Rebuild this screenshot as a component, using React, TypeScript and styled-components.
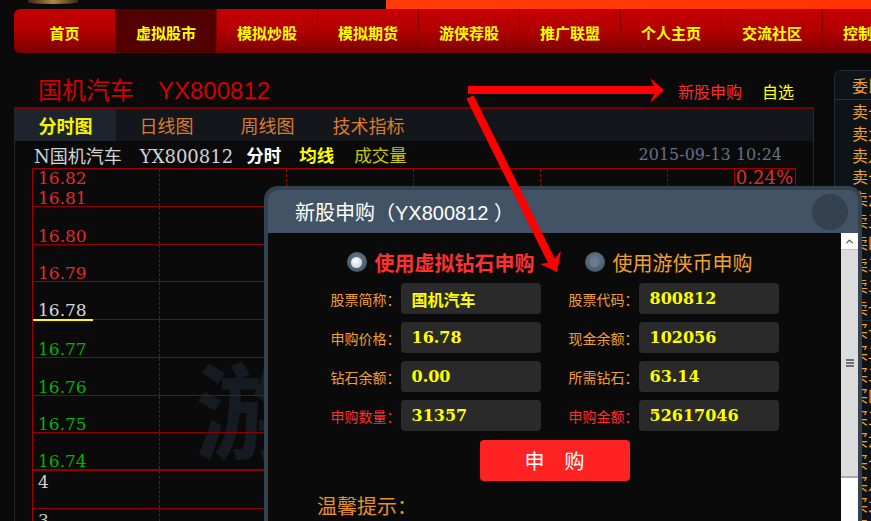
import React from 'react';
import styled, { createGlobalStyle } from 'styled-components';
import { ChevronUp } from 'lucide-react';

const GlobalStyle = createGlobalStyle`
  html, body { margin: 0; padding: 0; background: #0a0a0a; }
  body { font-family: "Liberation Sans", "Noto Sans CJK SC", sans-serif; }
  * { box-sizing: border-box; }
`;

const RED = '#e02a2a';
const GREEN = '#00b400';
const ORANGE = '#f0a030';

const Page = styled.div`
    position: relative;
    width: 871px;
    height: 521px;
    overflow: hidden;
    background: #0a0a0a;
`;

const TopStrip = styled.div`
    display: flex;
    height: 9px;
`;

const LogoBit = styled.div`
    margin-left: 28px;
    width: 50px;
    height: 4px;
    border-radius: 0 0 50% 50%;
    background: linear-gradient(90deg, #3a2a16, #b0883e, #3a2a16);
`;

const Banner = styled.div`
    margin-left: auto;
    width: 485px;
    height: 9px;
    background: linear-gradient(90deg, #ff3c0a, #ff3400);
`;

const NavBar = styled.nav`
    display: flex;
    margin-left: 14px;
    height: 44px;
    border-radius: 6px 0 0 6px;
    overflow: hidden;
`;

const NavItem = styled.a<{ $active?: boolean }>`
    flex: 0 0 101px;
    display: flex;
    align-items: center;
    justify-content: center;
    padding-top: 3px;
    color: #ffff00;
    font-size: 15px;
    font-weight: bold;
    white-space: nowrap;
    background: ${p => p.$active ? '#520000' : 'linear-gradient(#c60000, #b00000 50%, #7c0000)'};
    border-left: 1px solid #870000;
    &:first-child { border-left: none; }
`;

const Content = styled.div`
    display: flex;
    gap: 20px;
    padding-left: 14px;
`;

const Main = styled.div`
    flex: 0 0 800px;
`;

const TitleRow = styled.div`
    display: flex;
    align-items: center;
    height: 54px;
    padding: 16px 20px 0 24px;
`;

const StockTitle = styled.h1`
    margin: 0;
    font-size: 24px;
    font-weight: normal;
    color: #d40000;
    & span + span { margin-left: 24px; }
`;

const TitleLinks = styled.div`
    margin-left: auto;
    margin-top: 5px;
    display: flex;
    gap: 20px;
    font-size: 16px;
`;

const TitleLink = styled.a<{ $color: string }>`
    color: ${p => p.$color};
`;

const Panel = styled.div`
    border-top: 2px solid #780000;
    border-left: 1px solid #262626;
    border-right: 1px solid #262626;
`;

const TabBar = styled.div`
    display: flex;
    height: 32px;
    background: #13171c;
`;

const Tab = styled.div<{ $active?: boolean }>`
    flex: 0 0 101px;
    display: flex;
    align-items: center;
    justify-content: center;
    font-size: 18px;
    color: ${p => p.$active ? '#f4f400' : '#dc7a2c'};
    font-weight: ${p => p.$active ? 'bold' : 'normal'};
    background: ${p => p.$active ? '#1d242d' : 'transparent'};
`;

const InfoLine = styled.div`
    display: flex;
    align-items: center;
    height: 27px;
    padding: 0 31px 0 19px;
    font-family: "DejaVu Serif", "Noto Sans CJK SC", serif;
    font-size: 18px;
`;

const InfoName = styled.span`
    color: #d4d4d4;
    & b { font-weight: normal; margin-left: 18px; }
`;

const InfoTag = styled.span<{ $color: string; $bold?: boolean; $gap: number }>`
    margin-left: ${p => p.$gap}px;
    color: ${p => p.$color};
    font-weight: ${p => p.$bold ? 'bold' : 'normal'};
    font-family: "Noto Sans CJK SC", sans-serif;
    font-size: 17.5px;
`;

const DateText = styled.span`
    margin-left: auto;
    color: #64708a;
    font-size: 16px;
`;

const Chart = styled.div`
    position: relative;
    margin-left: 17px;
    width: 764px;
    border: 1px solid #a00000;
    border-bottom: none;
`;

const Watermark = styled.div`
    position: absolute;
    left: 162px;
    top: 186px;
    font-family: "Noto Sans CJK SC", sans-serif;
    font-weight: bold;
    font-size: 104px;
    line-height: 1;
    color: #151b23;
`;

const GridRow = styled.div<{ $heavy?: boolean }>`
    position: relative;
    display: grid;
    grid-template-columns: repeat(6, 1fr);
    height: 37.75px;
    border-bottom: ${p => p.$heavy ? 2 : 1}px solid #900000;
`;

const Cell = styled.div`
    border-right: 1px dashed #a00000;
    &:last-child { border-right: none; }
`;

const LabelCell = styled(Cell)<{ $align: 'top' | 'bottom' | 'split' }>`
    display: flex;
    flex-direction: column;
    justify-content: ${p => p.$align === 'top' ? 'flex-start' : p.$align === 'bottom' ? 'flex-end' : 'space-between'};
    align-items: flex-start;
    padding: ${p => p.$align === 'top' ? '3px 0 0 5px' : '1px 0 0 5px'};
`;

const Price = styled.span<{ $color: string; $mark?: boolean }>`
    position: relative;
    font-family: "DejaVu Serif", serif;
    font-size: 17px;
    line-height: 16px;
    color: ${p => p.$color};
    ${p => p.$mark ? `
        margin-left: -5px;
        padding: 0 0 1px 5px;
        width: 60px;
        margin-bottom: -2px;
        border-bottom: 2px solid #ffff00;
    ` : ''}
`;

const PercentCell = styled(Cell)`
    display: flex;
    justify-content: flex-end;
    align-items: flex-start;
`;

const PercentBox = styled.span`
    width: 61px;
    height: 19px;
    border-left: 1px solid #a00000;
    border-bottom: 1px solid #a00000;
    font-family: "DejaVu Serif", serif;
    font-size: 18px;
    line-height: 18px;
    color: ${RED};
    text-align: right;
    padding-right: 2px;
`;

const Side = styled.aside`
    flex: 0 0 200px;
    margin-top: 17px;
    height: 460px;
    border: 1px solid #232a33;
    border-radius: 7px 0 0 0;
    background: #0e1318;
`;

const SideHead = styled.div`
    height: 29px;
    padding: 7px 0 0 17px;
    border-bottom: 1px solid #2a313a;
    color: ${ORANGE};
    font-size: 16px;
    line-height: 18px;
`;

const SideGroup = styled.div`
    padding-top: 2px;
    border-bottom: 1px solid #2a313a;
`;

const SideRow = styled.div`
    height: 21.8px;
    padding-left: 17px;
    color: ${ORANGE};
    font-size: 16px;
    line-height: 21.8px;
`;

const Dialog = styled.div`
    position: absolute;
    left: 264px;
    top: 186px;
    width: 598px;
    height: 420px;
    display: flex;
    flex-direction: column;
    padding: 4px 4px 0 4px;
    border-radius: 14px 14px 0 0;
    background: #34414f;
`;

const DialogHeader = styled.div`
    flex: 0 0 43px;
    display: flex;
    align-items: center;
    padding: 0 10px 0 27px;
    border-radius: 10px 10px 0 0;
    background: #435366;
`;

const DialogTitle = styled.h2`
    margin: 0;
    font-size: 20px;
    font-weight: normal;
    color: #ffffff;
    white-space: pre;
`;

const CloseButton = styled.button`
    margin-left: auto;
    width: 36px;
    height: 36px;
    border: none;
    border-radius: 50%;
    background: #34424f;
`;

const DialogBody = styled.div`
    flex: 1;
    display: flex;
    background: #0a0a0a;
`;

const FormArea = styled.div`
    flex: 1;
    padding-top: 15px;
`;

const RadioRow = styled.div`
    display: flex;
    justify-content: center;
    gap: 50px;
    height: 28px;
    margin-right: 10px;
`;

const RadioOption = styled.label<{ $color: string; $bold?: boolean }>`
    display: flex;
    align-items: center;
    gap: 8px;
    font-size: 20px;
    color: ${p => p.$color};
    font-weight: ${p => p.$bold ? 'bold' : 'normal'};
`;

const RadioDot = styled.span<{ $checked?: boolean }>`
    display: flex;
    align-items: center;
    justify-content: center;
    width: 20px;
    height: 20px;
    border-radius: 50%;
    background: radial-gradient(circle at 50% 40%, #6c7d91, #3e4d5f);
    &::after {
        content: '';
        width: ${p => p.$checked ? 11 : 9}px;
        height: ${p => p.$checked ? 11 : 9}px;
        border-radius: 50%;
        background: ${p => p.$checked ? 'radial-gradient(circle at 40% 35%, #ffffff, #c4c9d0)' : '#6b7c91'};
    }
`;

const Fields = styled.div`
    display: flex;
    flex-direction: column;
    gap: 8px;
    margin-top: 7px;
`;

const FieldRow = styled.div`
    display: flex;
    justify-content: center;
    gap: 28px;
`;

const Field = styled.div`
    display: flex;
    align-items: center;
`;

const FieldLabel = styled.span<{ $color: string }>`
    flex: 0 0 70px;
    font-size: 14px;
    white-space: nowrap;
    color: ${p => p.$color};
`;

const FieldValue = styled.div`
    width: 140px;
    height: 31px;
    padding-left: 11px;
    display: flex;
    align-items: center;
    border-radius: 4px;
    background: #2a2a2a;
    color: #ffff00;
    font-family: "DejaVu Serif", "Noto Sans CJK SC", serif;
    font-weight: bold;
    font-size: 16px;
`;

const SubmitRow = styled.div`
    display: flex;
    justify-content: center;
    margin-top: 9px;
`;

const SubmitButton = styled.button`
    width: 150px;
    height: 41px;
    border: none;
    border-radius: 4px;
    background: #ff2222;
    color: #ffffff;
    font-family: "Noto Sans CJK SC", sans-serif;
    font-size: 20px;
`;

const Tips = styled.div`
    margin: 10px 0 0 49px;
    font-size: 20px;
    color: #e8922c;
`;

const Scrollbar = styled.div`
    flex: 0 0 17px;
    display: flex;
    flex-direction: column;
    background: #ffffff;
`;

const ScrollUp = styled.div`
    height: 16px;
    display: flex;
    align-items: center;
    justify-content: center;
    color: #555;
`;

const ScrollThumb = styled.div`
    height: 229px;
    display: flex;
    align-items: center;
    justify-content: center;
    background: #dcdcdc;
    border-top: 1px solid #c4c4c4;
    border-bottom: 2px solid #aaaaaa;
`;

const Grip = styled.span`
    width: 8px;
    height: 8px;
    background: repeating-linear-gradient(#707070 0 2px, transparent 2px 3px);
`;

const Arrows = styled.svg`
    position: absolute;
    left: 0;
    top: 0;
    pointer-events: none;
`;

const navItems = ['首页', '虚拟股市', '模拟炒股', '模拟期货', '游侠荐股', '推广联盟', '个人主页', '交流社区', '控制面板'];
const tabs = ['分时图', '日线图', '周线图', '技术指标'];

type PriceRow = {
    align: 'top' | 'bottom' | 'split';
    labels: { text: string; color: string; mark?: boolean }[];
    heavy?: boolean;
    percent?: string;
};

const priceRows: PriceRow[] = [
    { align: 'split', labels: [{ text: '16.82', color: RED }, { text: '16.81', color: RED }], percent: '0.24%' },
    { align: 'bottom', labels: [{ text: '16.80', color: RED }] },
    { align: 'bottom', labels: [{ text: '16.79', color: RED }] },
    { align: 'bottom', labels: [{ text: '16.78', color: '#d8d8d8', mark: true }] },
    { align: 'bottom', labels: [{ text: '16.77', color: GREEN }] },
    { align: 'bottom', labels: [{ text: '16.76', color: GREEN }] },
    { align: 'bottom', labels: [{ text: '16.75', color: GREEN }] },
    { align: 'bottom', labels: [{ text: '16.74', color: GREEN }], heavy: true },
    { align: 'top', labels: [{ text: '4', color: '#d0d0d0' }] },
    { align: 'top', labels: [{ text: '3', color: '#d0d0d0' }] },
];

const sellRows = ['卖十', '卖九', '卖八', '卖七', '卖六', '卖五', '卖四', '卖三', '卖二', '卖一'];
const buyRows = ['买一', '买二', '买三', '买四', '买五', '买六', '买七', '买八', '买九', '买十'];

const fields = [
    [{ label: '股票简称：', value: '国机汽车' }, { label: '股票代码：', value: '800812' }],
    [{ label: '申购价格：', value: '16.78' }, { label: '现金余额：', value: '102056' }],
    [{ label: '钻石余额：', value: '0.00' }, { label: '所需钻石：', value: '63.14' }],
    [{ label: '申购数量：', value: '31357', red: true }, { label: '申购金额：', value: '52617046', red: true }],
];

const App: React.FC = () => {
    return (
        <Page>
            <GlobalStyle />
            <TopStrip>
                <LogoBit />
                <Banner />
            </TopStrip>
            <NavBar>
                {navItems.map(item => (
                    <NavItem key={item} $active={item === '虚拟股市'}>{item}</NavItem>
                ))}
            </NavBar>

            <Content>
                <Main>
                    <TitleRow>
                        <StockTitle><span>国机汽车</span><span>YX800812</span></StockTitle>
                        <TitleLinks>
                            <TitleLink $color="#ff2a2a">新股申购</TitleLink>
                            <TitleLink $color="#ffff00">自选</TitleLink>
                        </TitleLinks>
                    </TitleRow>
                    <Panel>
                        <TabBar>
                            {tabs.map((t, i) => <Tab key={t} $active={i === 0}>{t}</Tab>)}
                        </TabBar>
                        <InfoLine>
                            <InfoName>N国机汽车<b>YX800812</b></InfoName>
                            <InfoTag $color="#ffffff" $bold $gap={13}>分时</InfoTag>
                            <InfoTag $color="#ffff00" $bold $gap={18}>均线</InfoTag>
                            <InfoTag $color="#c8c800" $gap={20}>成交量</InfoTag>
                            <DateText>2015-09-13 10:24</DateText>
                        </InfoLine>
                        <Chart>
                            <Watermark>游</Watermark>
                            {priceRows.map((row, i) => (
                                <GridRow key={i} $heavy={row.heavy}>
                                    <LabelCell $align={row.align}>
                                        {row.labels.map(l => (
                                            <Price key={l.text} $color={l.color} $mark={l.mark}>{l.text}</Price>
                                        ))}
                                    </LabelCell>
                                    <Cell />
                                    <Cell />
                                    <Cell />
                                    <Cell />
                                    {row.percent
                                        ? <PercentCell><PercentBox>{row.percent}</PercentBox></PercentCell>
                                        : <Cell />}
                                </GridRow>
                            ))}
                        </Chart>
                    </Panel>
                </Main>

                <Side>
                    <SideHead>委比</SideHead>
                    <SideGroup>
                        {sellRows.map(r => <SideRow key={r}>{r}</SideRow>)}
                    </SideGroup>
                    {buyRows.map(r => <SideRow key={r}>{r}</SideRow>)}
                </Side>
            </Content>

            <Dialog>
                <DialogHeader>
                    <DialogTitle>新股申购（YX800812 ）</DialogTitle>
                    <CloseButton aria-label="close" />
                </DialogHeader>
                <DialogBody>
                    <FormArea>
                        <RadioRow>
                            <RadioOption $color="#ff3030" $bold><RadioDot $checked />使用虚拟钻石申购</RadioOption>
                            <RadioOption $color={ORANGE}><RadioDot />使用游侠币申购</RadioOption>
                        </RadioRow>
                        <Fields>
                            {fields.map((pair, i) => (
                                <FieldRow key={i}>
                                    {pair.map(f => (
                                        <Field key={f.label}>
                                            <FieldLabel $color={'red' in f && f.red ? '#ff3030' : ORANGE}>{f.label}</FieldLabel>
                                            <FieldValue>{f.value}</FieldValue>
                                        </Field>
                                    ))}
                                </FieldRow>
                            ))}
                        </Fields>
                        <SubmitRow>
                            <SubmitButton>申　购</SubmitButton>
                        </SubmitRow>
                        <Tips>温馨提示：</Tips>
                    </FormArea>
                    <Scrollbar>
                        <ScrollUp><ChevronUp size={11} strokeWidth={2.5} /></ScrollUp>
                        <ScrollThumb><Grip /></ScrollThumb>
                    </Scrollbar>
                </DialogBody>
            </Dialog>

            <Arrows width="871" height="521" viewBox="0 0 871 521">
                <rect x="468" y="86" width="190" height="8" fill="#ff0000" />
                <polygon points="650,78 664,90 650,103 656,90" fill="#ff0000" />
                <line x1="470" y1="97" x2="552" y2="262" stroke="#ff0000" strokeWidth="8" />
                <polygon points="557,272 540,264 552,262 561,251" fill="#ff0000" />
            </Arrows>
        </Page>
    );
};

export default App;
